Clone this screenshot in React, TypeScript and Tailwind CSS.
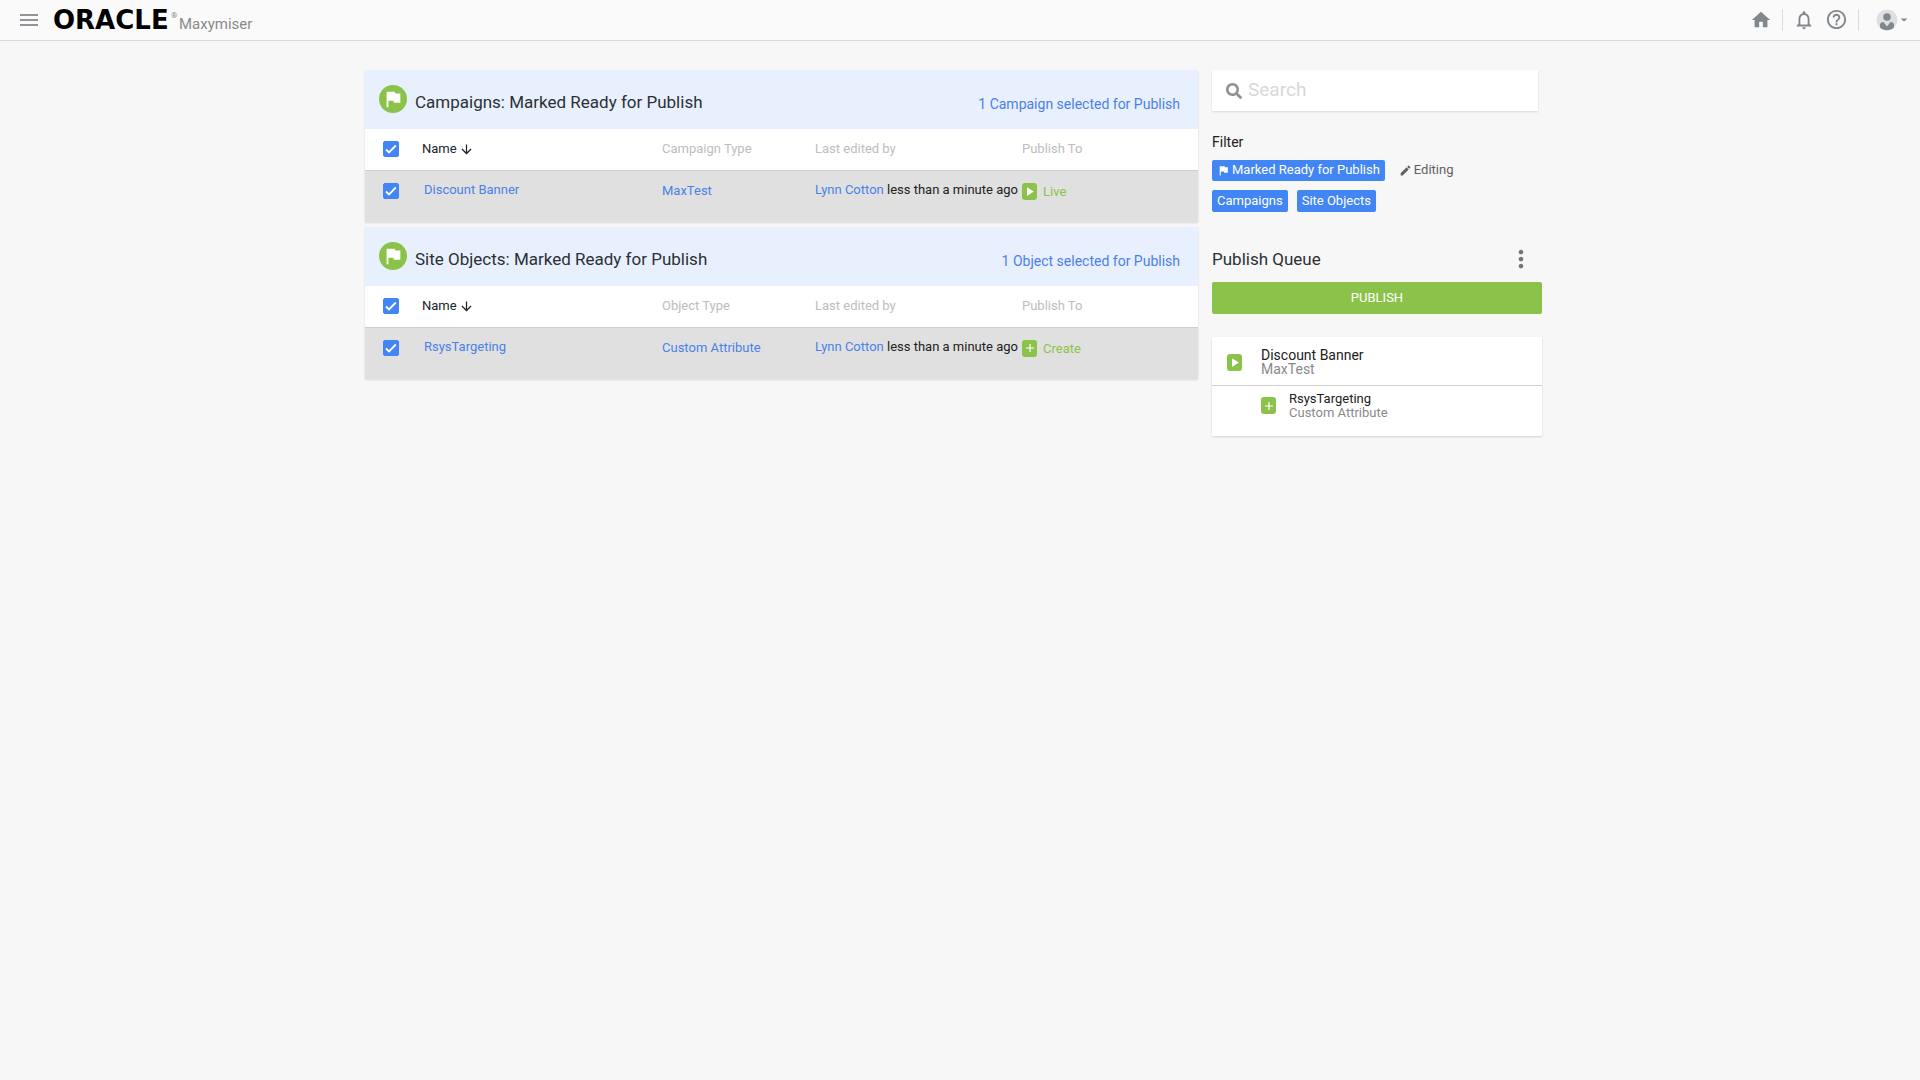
import React, { useState } from 'react';
import {
  MdAdd,
  MdArrowDownward,
  MdCheck,
  MdEdit,
  MdFlag,
  MdHelpOutline,
  MdHome,
  MdMenu,
  MdMoreVert,
  MdNotificationsNone,
  MdPlayArrow,
} from 'react-icons/md';
import { FaSearch } from 'react-icons/fa';

type Action = 'live' | 'create';

interface PublishItem {
  name: string;
  type: string;
  editor: string;
  edited: string;
  action: Action;
}

interface PublishSection {
  title: string;
  summary: string;
  typeLabel: string;
  items: PublishItem[];
}

const SECTIONS: PublishSection[] = [
  {
    title: 'Campaigns: Marked Ready for Publish',
    summary: '1 Campaign selected for Publish',
    typeLabel: 'Campaign Type',
    items: [
      { name: 'Discount Banner', type: 'MaxTest', editor: 'Lynn Cotton', edited: 'less than a minute ago', action: 'live' },
    ],
  },
  {
    title: 'Site Objects: Marked Ready for Publish',
    summary: '1 Object selected for Publish',
    typeLabel: 'Object Type',
    items: [
      { name: 'RsysTargeting', type: 'Custom Attribute', editor: 'Lynn Cotton', edited: 'less than a minute ago', action: 'create' },
    ],
  },
];

const ActionIcon: React.FC<{ action: Action }> = ({ action }) => (
  <span className="flex h-[17px] w-[15px] shrink-0 items-center justify-center rounded-[3px] bg-[#8bc34a] text-white">
    {action === 'live' ? <MdPlayArrow size={15} /> : <MdAdd size={14} />}
  </span>
);

const Checkbox: React.FC<{ label: string }> = ({ label }) => {
  const [checked, setChecked] = useState(true);

  return (
    <label className="grid size-4 cursor-pointer">
      <input
        type="checkbox"
        aria-label={label}
        checked={checked}
        onChange={e => setChecked(e.target.checked)}
        className="col-start-1 row-start-1 size-4 appearance-none rounded-[2px] border border-gray-400 bg-white checked:border-[#4285f4] checked:bg-[#4285f4]"
      />
      {checked && (
        <svg viewBox="0 0 16 16" className="pointer-events-none col-start-1 row-start-1 size-4" fill="none" stroke="white" strokeWidth="1.8">
          <path d="M3 8.500L6 11.500L12.800 4.500" />
        </svg>
      )}
    </label>
  );
};

const Header: React.FC = () => (
  <header className="flex h-[41px] items-center justify-between border-b border-[#d9d9d9] bg-[#fafafa] pr-3 pb-px pl-[17px] text-[#82878c]">
    <div className="flex items-center">
      <button type="button" aria-label="Menu" className="text-[#8f959b]">
        <MdMenu size={24} />
      </button>
      <a href="#" className="ml-3 flex items-baseline">
        <span className="w-[118px] font-['DejaVu_Sans',sans-serif] text-[26px] leading-8 font-bold text-black">ORACLE</span>
        <span className="w-2 self-start pt-[6px] text-[8px] leading-3">®</span>
        <span className="text-[15px] leading-6 text-[#8a8a8a]">Maxymiser</span>
      </a>
    </div>
    <div className="flex items-center">
      <button type="button" aria-label="Home"><MdHome size={22} /></button>
      <span className="mx-[10px] h-[22px] w-px bg-[#dcdcdc]" />
      <button type="button" aria-label="Notifications"><MdNotificationsNone size={22} /></button>
      <button type="button" aria-label="Help" className="ml-[10px]"><MdHelpOutline size={23} /></button>
      <span className="mr-[17px] ml-[10px] h-[22px] w-px bg-[#dcdcdc]" />
      <button type="button" aria-label="Account" className="flex items-center gap-[2px]">
        <svg width="22" height="22" viewBox="0 0 22 22">
          <circle cx="11" cy="11" r="10.5" fill="#dce0e5" />
          <circle cx="11" cy="8" r="3.8" fill="#82878c" />
          <path d="M4 18.5V15.500C4 14 5.500 13 7.500 13L11 17.500L14.500 13C16.500 13 18 14 18 15.500V18.500C14.500 22 7.500 22 4 18.500Z" fill="#82878c" />
        </svg>
        <svg width="8" height="4" viewBox="0 0 8 4">
          <path d="M0.500 0.500H7.500L4 3.500Z" fill="#82878c" />
        </svg>
      </button>
    </div>
  </header>
);

const SectionPanel: React.FC<{ section: PublishSection }> = ({ section }) => (
  <section className="bg-[#e8f0fe] shadow-[0_1px_2px_rgba(0,0,0,0.12)]">
    <div className="flex h-[59px] items-center justify-between pr-[18px] pl-[14px]">
      <div className="flex items-center gap-2">
        <span className="mb-px flex size-7 items-center justify-center rounded-full bg-[#8bc34a] text-white">
          <MdFlag size={22} />
        </span>
        <h2 className="pt-1 text-[17px] leading-6 text-[#2b3035]">{section.title}</h2>
      </div>
      <p className="pt-2 text-[14px] leading-5 text-[#4a80e8]">{section.summary}</p>
    </div>
    <table className="w-full table-fixed border-collapse text-left text-[13px] leading-4">
      <colgroup>
        <col className="w-[57px]" />
        <col className="w-[240px]" />
        <col className="w-[153px]" />
        <col className="w-[207px]" />
        <col />
      </colgroup>
      <thead>
        <tr className="h-[41px] bg-white text-[#bdbdbd]">
          <th className="pl-[18px]"><Checkbox label={`Select all: ${section.title}`} /></th>
          <th className="font-normal text-[#212529]">
            <button type="button" className="flex items-center gap-[2px]">
              Name <MdArrowDownward size={15} />
            </button>
          </th>
          <th className="font-normal">{section.typeLabel}</th>
          <th className="font-normal">Last edited by</th>
          <th className="font-normal">Publish To</th>
        </tr>
      </thead>
      <tbody>
        {section.items.map(item => (
          <tr key={item.name} className="h-[52px] border-t border-[#cfcfcf] bg-[#e0e0e0] align-top text-[#4a80e8]">
            <td className="pt-3 pl-[18px]"><Checkbox label={`Select ${item.name}`} /></td>
            <td className="pt-[11px] pl-[2px]"><a href="#">{item.name}</a></td>
            <td className="pt-3"><a href="#">{item.type}</a></td>
            <td className="pt-[11px] whitespace-nowrap text-[#212121]">
              <a href="#" className="text-[#4a80e8]">{item.editor}</a> {item.edited}
            </td>
            <td className="pt-3 text-[#8bc34a]">
              <span className="flex items-center gap-[6px]">
                <ActionIcon action={item.action} />
                <span className="pt-px">{item.action === 'live' ? 'Live' : 'Create'}</span>
              </span>
            </td>
          </tr>
        ))}
      </tbody>
    </table>
  </section>
);

const Filters: React.FC = () => (
  <div className="mt-[19px] text-[13px]">
    <h3 className="text-[14px] leading-6 text-[#212121]">Filter</h3>
    <div className="mt-[6px] flex gap-[14px]">
      <button type="button" className="flex h-[21px] items-center gap-[2px] rounded-[2px] bg-[#4285f4] px-[5px] pb-px text-white">
        <MdFlag size={13} /> Marked Ready for Publish
      </button>
      <button type="button" className="flex h-[21px] items-center gap-[2px] pb-px text-[#616161]">
        <MdEdit size={13} /> Editing
      </button>
    </div>
    <div className="mt-[9px] flex gap-[9px]">
      <button type="button" className="h-[22px] rounded-[2px] bg-[#4285f4] px-[5px] text-white">Campaigns</button>
      <button type="button" className="h-[22px] rounded-[2px] bg-[#4285f4] px-[5px] text-white">Site Objects</button>
    </div>
  </div>
);

const Queue: React.FC = () => (
  <div className="mt-[35px]">
    <div className="flex h-6 items-center justify-between pr-[7px]">
      <h3 className="text-[17px] leading-6 text-[#2b3035]">Publish Queue</h3>
      <button type="button" aria-label="Queue options" className="text-[#757575]"><MdMoreVert size={28} /></button>
    </div>
    <button type="button" className="mt-[11px] h-8 w-full rounded-[2px] bg-[#8bc34a] text-[13px] text-white">
      PUBLISH
    </button>
    <ul className="mt-[23px] bg-white leading-[14px] text-[#212121] shadow-[0_1px_2px_rgba(0,0,0,0.15)]">
      <li className="flex h-12 items-center gap-[19px] pt-[2px] pl-[15px] text-[14px]">
        <ActionIcon action="live" />
        <div>
          <p>Discount Banner</p>
          <p className="text-[#8a8a8a]">MaxTest</p>
        </div>
      </li>
      <li className="flex h-[51px] items-start gap-[13px] border-t border-[#cfcfcf] pt-[6px] pl-[49px] text-[13px]">
        <span className="pt-[5px]"><ActionIcon action="create" /></span>
        <div>
          <p>RsysTargeting</p>
          <p className="text-[#8a8a8a]">Custom Attribute</p>
        </div>
      </li>
    </ul>
  </div>
);

const App: React.FC = () => {
  const [search, setSearch] = useState('');

  return (
    <div className="min-h-screen bg-[#f7f7f7] font-[Roboto,sans-serif]">
      <Header />
      <div className="mx-auto flex max-w-[1190px] items-start gap-[14px] pt-[29px] pr-[13px]">
        <main className="flex min-w-0 flex-1 flex-col gap-[5px]">
          {SECTIONS.map(section => (
            <SectionPanel key={section.title} section={section} />
          ))}
        </main>
        <aside className="w-[330px] shrink-0">
          <div className="mr-1 flex h-[41px] items-center gap-[6px] bg-white pl-[14px] shadow-[0_1px_2px_rgba(0,0,0,0.12)]">
            <FaSearch size={16} className="shrink-0 text-[#8f8f8f]" />
            <input
              type="text"
              aria-label="Search"
              placeholder="Search"
              value={search}
              onChange={e => setSearch(e.target.value)}
              className="w-full text-[19px] text-[#212121] outline-none placeholder:text-[#d8d8d8]"
            />
          </div>
          <Filters />
          <Queue />
        </aside>
      </div>
    </div>
  );
};

export default App;
